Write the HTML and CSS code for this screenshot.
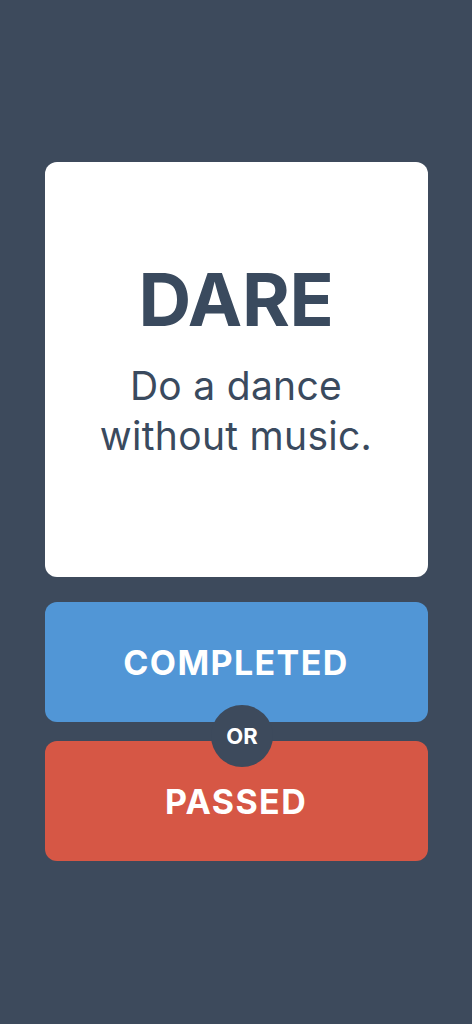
FILE: index.html
```html
<!DOCTYPE html>
<html lang="en">

<head>
    <meta charset="UTF-8">
    <meta name="viewport" content="width=device-width, initial-scale=1.0">
    <title>Truth or Dare</title>
    <link rel="stylesheet" href="styles.css">
</head>

<body>
    <div class="game">

        <div class="card">
            <h1 class="card-type">DARE</h1>
            <p class="card-text">Do a dance<br>without music.</p>
        </div>

        <div class="choices">
            <button class="choice choice-completed">COMPLETED</button>
            <button class="choice choice-passed">PASSED</button>
            <span class="or-badge">OR</span>
        </div>

    </div>
</body>

</html>
```

FILE: styles.css
```css
body {
    font-family: Inter, "Noto Sans", sans-serif;
    margin: 0;
    padding: 0 0 1px 0;
    box-sizing: border-box;
    display: flex;
    flex-direction: column;
    align-items: center;
    justify-content: center;
    height: 100vh;
    background-color: #3d4a5c;
}

.game {
    width: 383px;
    display: flex;
    flex-direction: column;
}

.card {
    height: 415px;
    box-sizing: border-box;
    padding-bottom: 21px;
    background-color: #fff;
    border-radius: 12px;
    display: flex;
    flex-direction: column;
    align-items: center;
    justify-content: center;
    color: #3a4a5e;
    margin-bottom: 25px;
}

.card-type {
    margin: 0;
    font-size: 73px;
    font-weight: 700;
    line-height: 1;
    letter-spacing: -0.3px;
    padding-top: 6px;
}

.card-text {
    margin: 25px 0 0 0;
    font-size: 39px;
    font-weight: 400;
    line-height: 50px;
    letter-spacing: 0.3px;
    text-align: center;
}

.choices {
    position: relative;
    display: flex;
    flex-direction: column;
    gap: 19px;
}

.choice {
    height: 120px;
    border: none;
    border-radius: 12px;
    color: #fff;
    font-family: inherit;
    font-size: 34px;
    font-weight: 700;
    letter-spacing: 1.4px;
    cursor: pointer;
}

.choice-completed {
    background-color: #5196d6;
}

.choice-passed {
    background-color: #d65745;
}

/* круглый значок между кнопками */
.or-badge {
    position: absolute;
    left: 50%;
    top: 50%;
    width: 62px;
    height: 62px;
    margin: -27px 0 0 -25px;
    border-radius: 50%;
    background-color: #3d4a5c;
    color: #fff;
    font-size: 22px;
    font-weight: 700;
    display: flex;
    align-items: center;
    justify-content: center;
}
```
